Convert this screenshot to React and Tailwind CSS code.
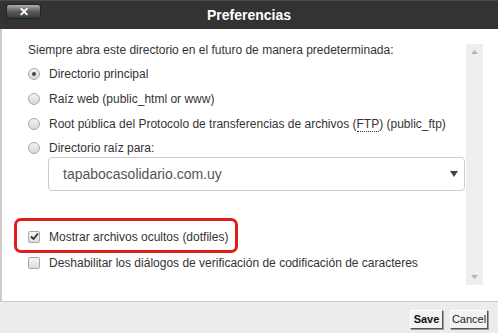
import React from "react";

const font = { fontFamily: '"Liberation Sans", Arial, sans-serif' };

const Radio = ({ checked }) => (
  <span className="relative w-[12px] h-[12px] rounded-full border border-[#a9a9a9] bg-gradient-to-b from-[#f4f4f4] to-[#d6d6d6] shrink-0">
    {checked && (
      <span className="absolute left-[3px] top-[3px] w-[4px] h-[4px] rounded-full bg-[#444]" />
    )}
  </span>
);

const Check = ({ checked }) => (
  <span className="relative w-[12px] h-[12px] rounded-[2px] border border-[#a9a9a9] bg-gradient-to-b from-[#f6f6f6] to-[#dcdcdc] shrink-0 flex items-center justify-center">
    {checked && (
      <svg width="9" height="9" viewBox="0 0 9 9">
        <path d="M1 4.5 L3.5 7 L8 1.5" fill="none" stroke="#333" strokeWidth="1.8" />
      </svg>
    )}
  </span>
);

const Row = ({ children, className = "" }) => (
  <div className={`flex items-center gap-[9px] h-[25px] whitespace-nowrap ${className}`}>{children}</div>
);

export default function App() {
  return (
    <div className="w-[498px] h-[333px] flex flex-col bg-white text-[12px] text-[#333]" style={font}>
      {/* title bar */}
      <div className="relative h-[29px] bg-[#333] border-t border-[#4a4a4a] flex items-center justify-center shrink-0">
        <button className="absolute left-[6px] top-[3px] w-[35px] h-[15px] rounded-[3px] border border-[#222] bg-gradient-to-b from-[#b0b0b0] via-[#5a5a5a] to-[#3a3a3a] flex items-center justify-center text-white font-bold text-[12px] leading-none shadow-[0_1px_0_#1a3a4a]">
          ✕
        </button>
        <span className="text-white font-bold text-[14px]">Preferencias</span>
      </div>

      {/* body */}
      <div className="flex-1 flex border-l-2 border-[#ccc] min-h-0">
        <div className="w-[464px] pt-[14px] pl-[26px]">
          <div className="h-[15px] leading-[15px] whitespace-nowrap">
            Siempre abra este directorio en el futuro de manera predeterminada:
          </div>
          <Row className="mt-[3px]">
            <Radio checked />
            <span>Directorio principal</span>
          </Row>
          <Row>
            <Radio />
            <span>Raíz web (public_html or www)</span>
          </Row>
          <Row>
            <Radio />
            <span>
              Root pública del Protocolo de transferencias de archivos (
              <abbr className="no-underline border-b border-dotted border-[#333]">FTP</abbr>
              ) (public_ftp)
            </span>
          </Row>
          <div className="flex items-center gap-[9px] h-[16px] mt-[4px]">
            <Radio />
            <span>Directorio raíz para:</span>
          </div>
          <div className="ml-[20px] mt-[1px] w-[417px] h-[34px] border border-[#ccc] rounded-[4px] flex items-center justify-between pl-[14px] pr-[6px]">
            <span className="text-[14px] text-[#555]">tapabocasolidario.com.uy</span>
            <svg width="8" height="6" viewBox="0 0 8 6">
              <path d="M0 0 H8 L4 6 Z" fill="#444" />
            </svg>
          </div>
          <Row className="relative mt-[33px]">
            <span className="absolute left-[-14px] top-[-6px] w-[224px] h-[35px] border-[3px] border-[#e41b1b] rounded-[7px]" />
            <Check checked />
            <span>Mostrar archivos ocultos (dotfiles)</span>
          </Row>
          <Row className="mt-[1px]">
            <Check />
            <span>Deshabilitar los diálogos de verificación de codificación de caracteres</span>
          </Row>
        </div>
        <div className="w-[17px] mt-[15px] h-[241px] bg-[#eee] flex flex-col items-center justify-between py-[6px]">
          <svg width="7" height="4" viewBox="0 0 7 4">
            <path d="M0 4 L3.5 0 L7 4 Z" fill="#b5b5b5" />
          </svg>
          <svg width="7" height="4" viewBox="0 0 7 4">
            <path d="M0 0 L7 0 L3.5 4 Z" fill="#b5b5b5" />
          </svg>
        </div>
      </div>

      {/* footer */}
      <div className="h-[32px] shrink-0 border-t border-[#ccc] bg-[#ececec] flex items-start justify-end gap-[7px] pr-[10px] pt-[8px]">
        <button className="w-[33px] h-[19px] bg-[#f2f2f2] border border-t-white border-l-white border-r-[#555] border-b-[#555] shadow-[1px_1px_0_#999] text-[11px] font-bold text-[#111] leading-none">
          Save
        </button>
        <button className="w-[38px] h-[19px] bg-[#f2f2f2] border border-t-white border-l-white border-r-[#555] border-b-[#555] shadow-[1px_1px_0_#999] text-[11px] text-[#223] leading-none">
          Cancel
        </button>
      </div>
    </div>
  );
}
